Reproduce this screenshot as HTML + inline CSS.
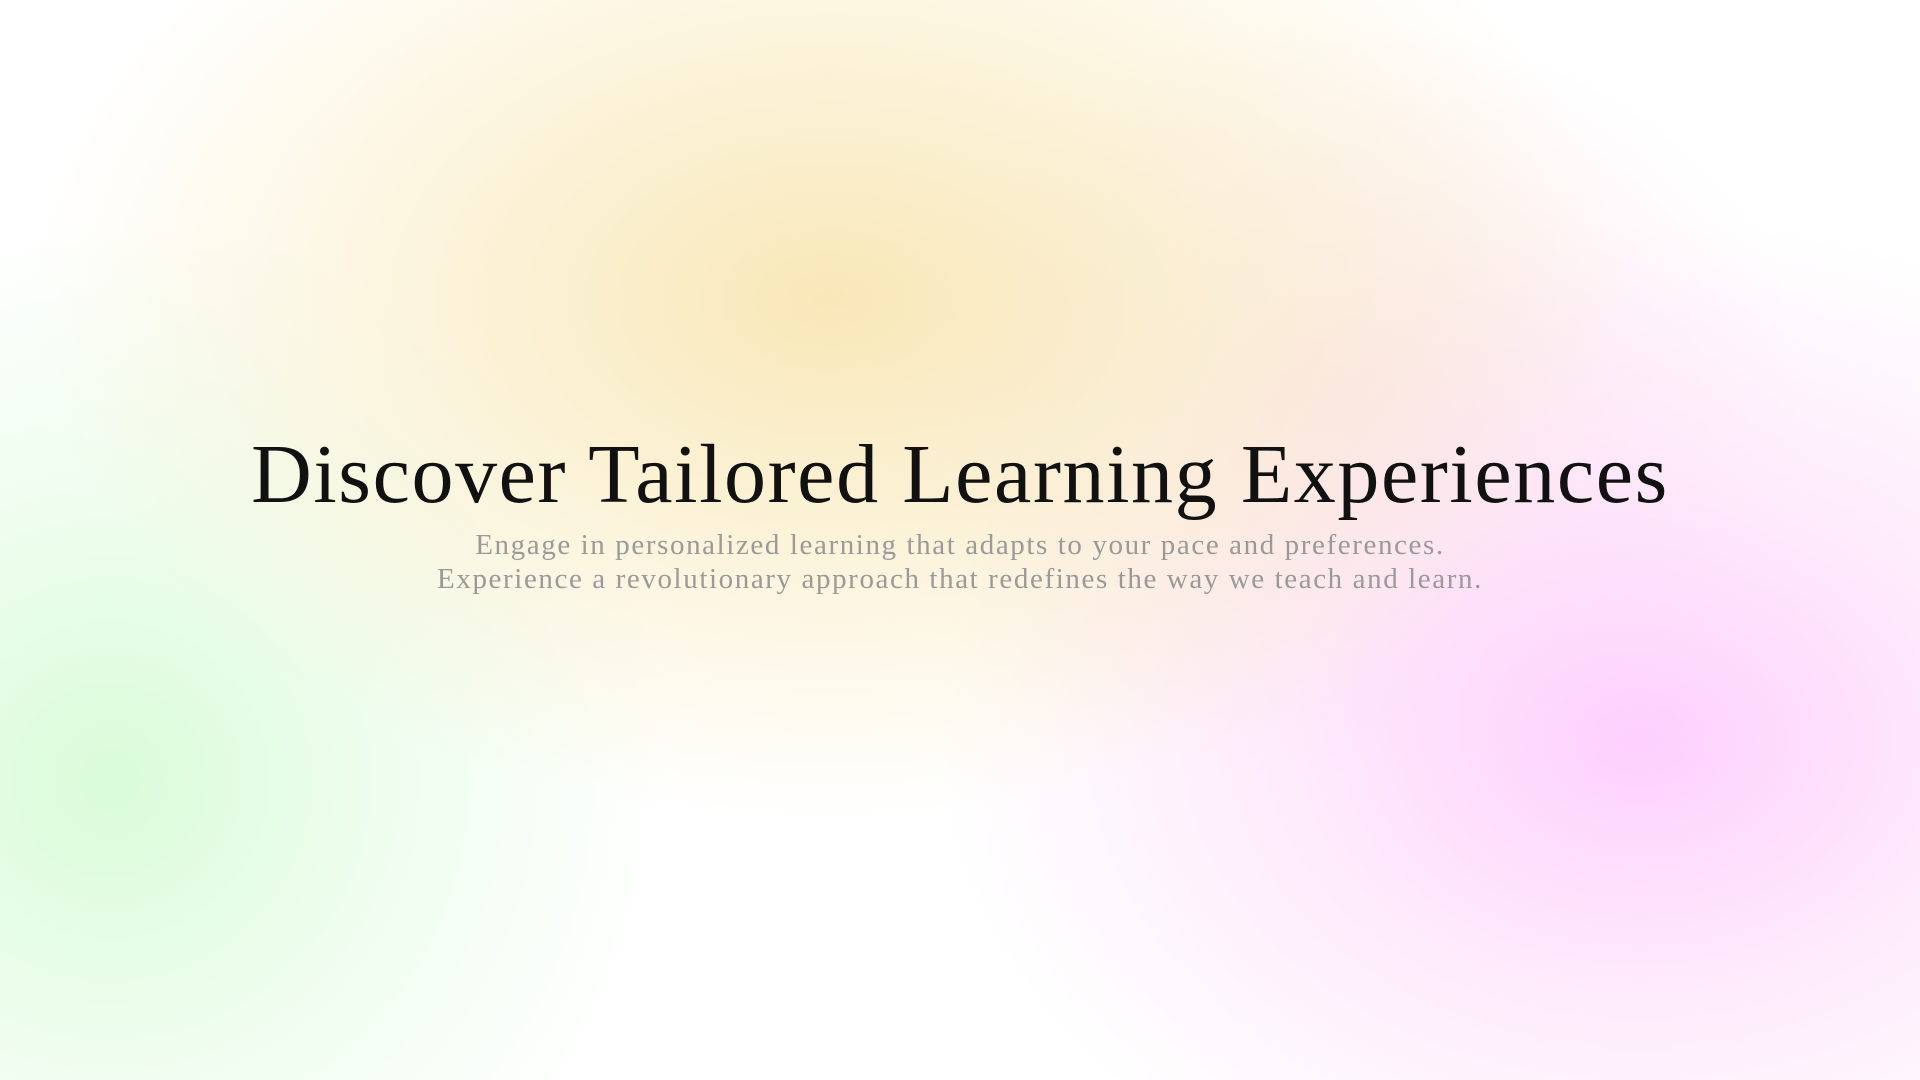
<!DOCTYPE html>
<html><head><meta charset="utf-8"><style>
html,body{margin:0;padding:0;width:1920px;height:1080px;overflow:hidden;background:#fff}
.bg{position:absolute;inset:0;
background:
radial-gradient(ellipse 800px 520px at 830px 300px, rgba(248,230,180,0.95), rgba(250,238,200,0.65) 50%, rgba(255,255,255,0) 100%),
radial-gradient(ellipse 700px 520px at 1640px 740px, rgba(253,205,253,0.95), rgba(253,222,250,0.6) 50%, rgba(255,255,255,0) 100%),
radial-gradient(ellipse 480px 380px at 1330px 400px, rgba(250,218,228,0.7), rgba(255,255,255,0) 100%),
radial-gradient(ellipse 560px 560px at 110px 780px, rgba(215,252,215,0.95), rgba(228,252,228,0.6) 50%, rgba(255,255,255,0) 100%),
#fff;}
.t{position:absolute;left:0;width:1920px;text-align:center;font-family:"Liberation Serif",serif}
h1{margin:0;top:420px;font-weight:400;font-size:84px;letter-spacing:1.6px;color:#111;line-height:110px}
.s{top:528px;font-size:29px;letter-spacing:1.6px;line-height:34px;color:#9a9a9a}
</style></head><body>
<div class="bg"></div>
<h1 class="t">Discover Tailored Learning Experiences</h1>
<div class="t s">Engage in personalized learning that adapts to your pace and preferences.<br>Experience a revolutionary approach that redefines the way we teach and learn.</div>
</body></html>
